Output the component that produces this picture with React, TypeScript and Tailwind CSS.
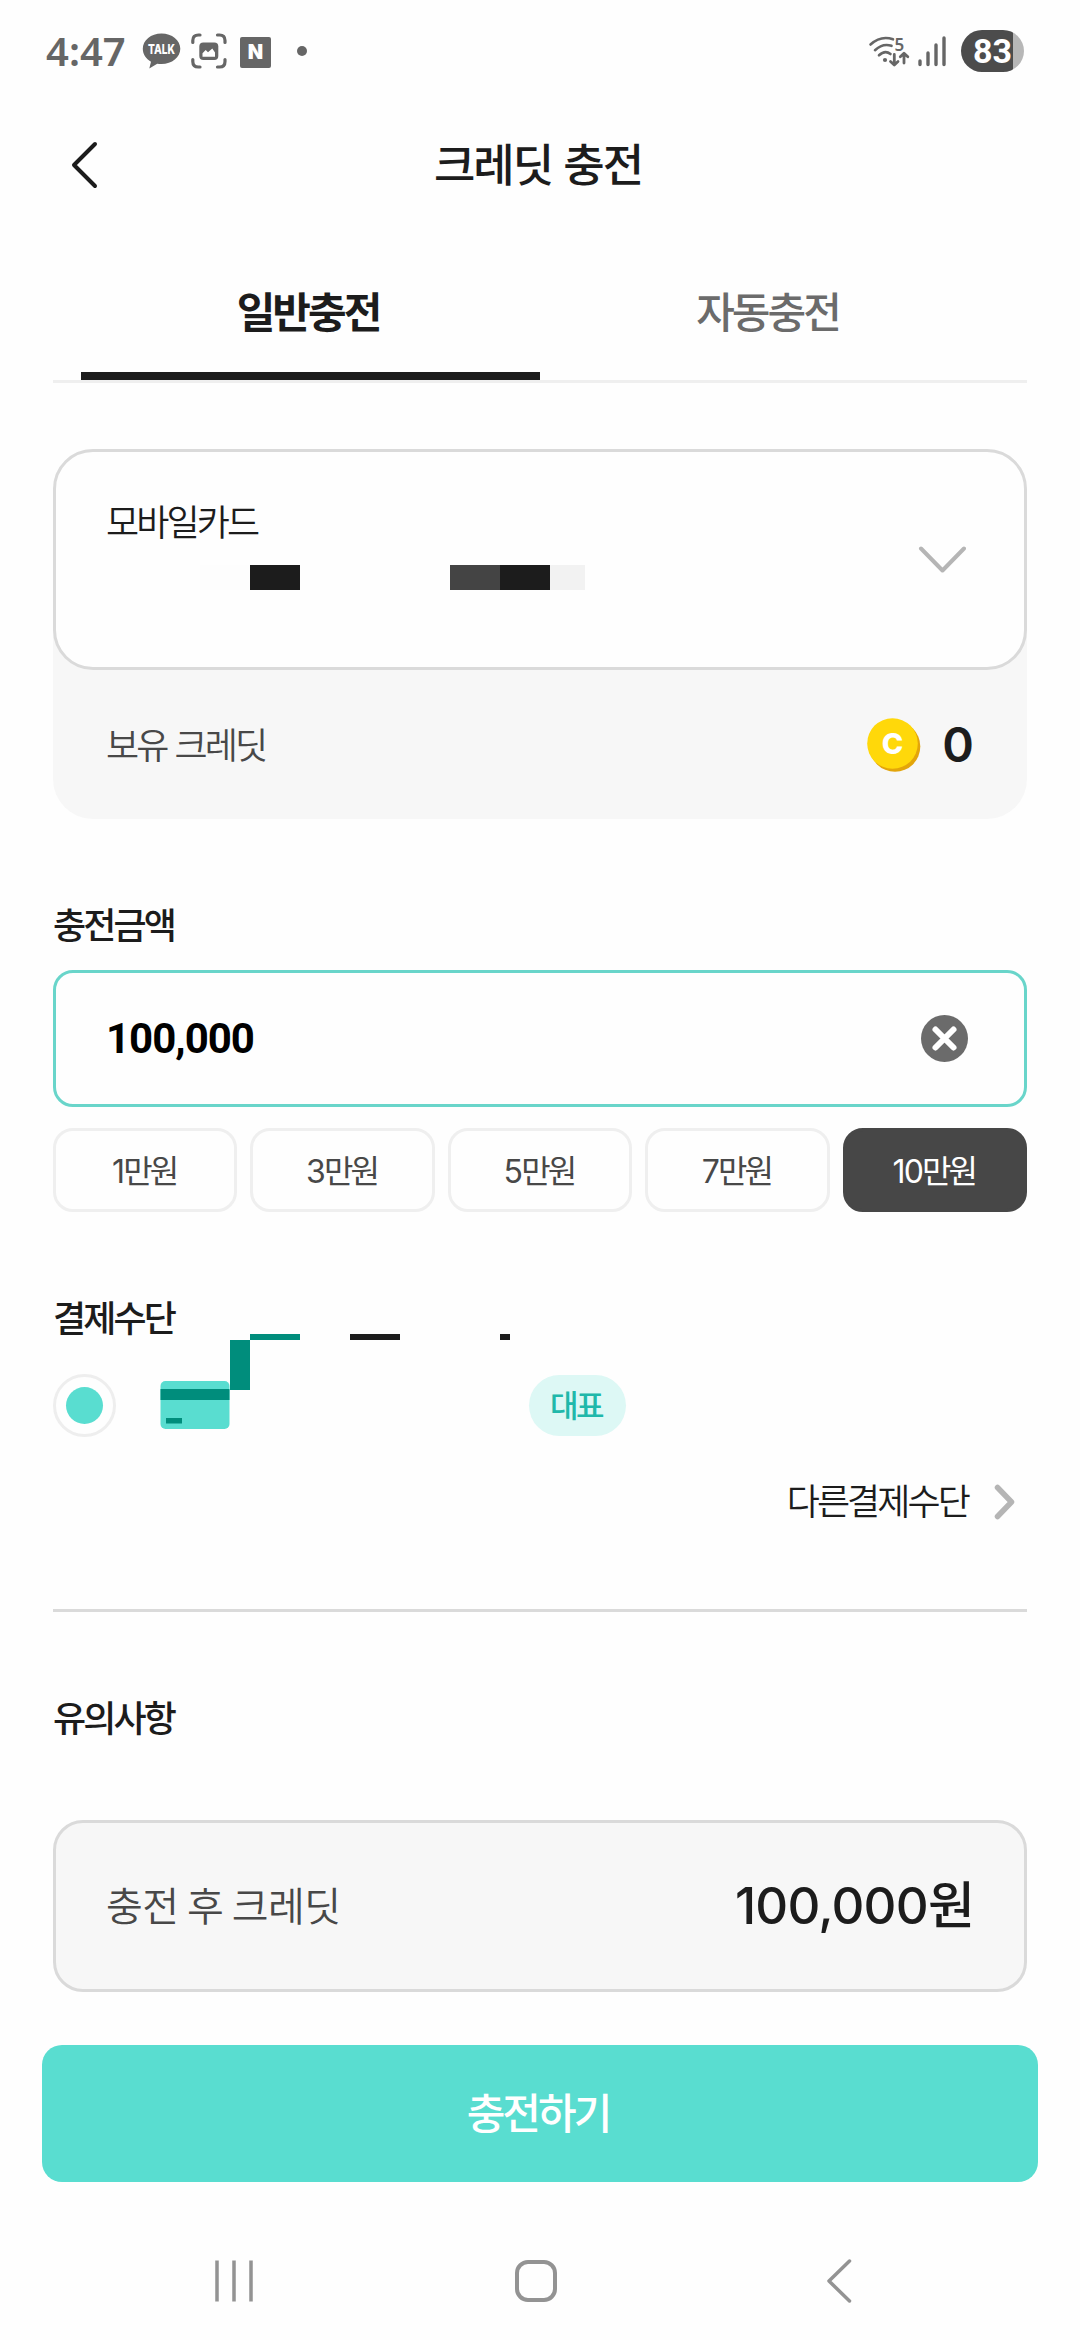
import React, { useState } from "react";
import clsx from "clsx";

const AMOUNTS = [
  { label: "1", value: 10000 },
  { label: "3", value: 30000 },
  { label: "5", value: 50000 },
  { label: "7", value: 70000 },
  { label: "10", value: 100000 },
];

function StatusBar() {
  return (
    <div className="flex h-[102px] items-center justify-between pl-[46px] pr-[56px] text-[#666666]">
      <div className="flex items-center">
        <span className="w-[96px] font-['Noto_Sans',sans-serif] text-[40px] leading-[50px] font-semibold">
          4:47
        </span>
        <svg className="overflow-visible" width="39" height="36" viewBox="0 0 39 36" fill="none">
          <path
            d="M19.500 0.500C9 0.500 0.800 7.200 0.800 15.800C0.800 21.300 4 26 9 28.700L7.300 35.500L15.200 30.700C16.600 31 18 31.100 19.500 31.100C30 31.100 38.300 24.300 38.300 15.800C38.300 7.200 30 0.500 19.500 0.500Z"
            fill="#666666"
          />
          <text
            x="19.500"
            y="20.800"
            textAnchor="middle"
            textLength="27"
            lengthAdjust="spacingAndGlyphs"
            fill="#ffffff"
            className="font-['Inter',sans-serif] text-[13.500px] font-extrabold"
          >
            TALK
          </text>
        </svg>
        <svg className="ml-[10px]" width="36" height="36" viewBox="0 0 36 36" fill="none">
          <path
            d="M1.800 9.500V7.500Q1.800 2 7.500 2H9M26.500 2H28.500Q34 2 34 7.500V9.500M34 26.500V28.500Q34 34 28.500 34H26.500M9 34H7.500Q1.800 34 1.800 28.500V26.500"
            stroke="#666666"
            strokeWidth="3.200"
            strokeLinecap="round"
          />
          <rect x="8.300" y="9.500" width="19" height="17.500" rx="4" fill="#666666" />
          <path
            d="M11.500 23.700V20.300L14.700 17L17 19.300L21.300 15.500L24 19.500V23.700Z"
            fill="#ffffff"
          />
        </svg>
        <span className="ml-[13px] mt-[2px] flex h-[31px] w-[31px] items-center justify-center rounded-[2px] bg-[#666666] font-['Inter',sans-serif] text-[20px] leading-none font-black text-white">
          N
        </span>
        <span className="ml-[26px] h-[10px] w-[10px] rounded-full bg-[#666666]" />
      </div>
      <div className="flex items-center">
        <svg className="overflow-visible" width="40" height="32" viewBox="0 0 40 32" fill="none">
          <path
            d="M1.500 9.500Q12 0 24 4.300M6 15.200Q13.500 8 22.500 10.800M10 20.300Q16 14.500 21.500 19"
            stroke="#666666"
            strokeWidth="2.600"
            strokeLinecap="round"
          />
          <circle cx="16" cy="25" r="2.100" fill="#666666" />
          <text x="25.500" y="16" fill="#666666" className="font-['Noto_Sans',sans-serif] text-[17px] font-semibold">
            5
          </text>
          <path
            d="M25.300 19.500V30M21.500 26.500L25.300 30L29 26.500M35 28V18.500M31.300 21.800L35 18.200L38.800 21.800"
            stroke="#666666"
            strokeWidth="2.800"
            strokeLinecap="round"
            strokeLinejoin="round"
          />
        </svg>
        <svg className="ml-[9px]" width="28" height="32" viewBox="0 0 28 32">
          <path
            d="M2 26V29.500M10 18V29.500M18 10V29.500M26 3V29.500"
            stroke="#666666"
            strokeWidth="3.400"
            strokeLinecap="round"
          />
        </svg>
        <div className="ml-[15px] flex h-[42px] w-[63px] items-center rounded-[21px] bg-[linear-gradient(to_right,#4c4c4c_52px,#b7b7b7_52px)] pl-[12px] font-['Roboto',sans-serif] text-[34px] leading-none font-bold text-white">
          83
        </div>
      </div>
    </div>
  );
}

function Header() {
  return (
    <header className="grid h-[126px] grid-cols-[140px_1fr_140px] items-center">
      <button className="pl-[71px]">
        <svg width="28" height="48" viewBox="0 0 28 48" fill="none">
          <path
            d="M24 3L3 24L24 45"
            stroke="#1c1c1c"
            strokeWidth="4"
            strokeLinecap="round"
            strokeLinejoin="round"
          />
        </svg>
      </button>
      <h1 className="-mt-[4px] pr-[4px] text-center text-[45px] leading-[60px] font-medium tracking-[-2px] [word-spacing:3px]">
        크레딧 충전
      </h1>
    </header>
  );
}

function Tabs() {
  return (
    <div className="mx-[53px] grid h-[155px] grid-cols-2 border-b-[3px] border-[#efefef] px-[28px] text-[42px] leading-[60px] tracking-[-3px]">
      <button className="border-b-[8px] border-[#1c1c1c] pt-[20px] pr-[5px] font-bold">일반충전</button>
      <button className="border-b-[8px] border-transparent pt-[20px] pr-[4px] font-medium text-[#6b6b6b]">
        자동충전
      </button>
    </div>
  );
}

function Coin() {
  return (
    <svg width="54" height="54" viewBox="0 0 54 54">
      <circle cx="28" cy="28.500" r="25.300" fill="#e3a50a" />
      <circle cx="25.500" cy="25.500" r="25.300" fill="#ffd80a" />
      <text
        x="25.500"
        y="36"
        textAnchor="middle"
        fill="#ffffff"
        className="font-['Inter',sans-serif] text-[29px] font-extrabold"
      >
        C
      </text>
    </svg>
  );
}

function CardSelect() {
  return (
    <section className="mt-[66px] h-[370px] rounded-[40px] bg-[#f7f7f7]">
      <button className="flex h-[221px] w-full items-start justify-between rounded-[40px] border-[3px] border-[#dadada] bg-[#fefefe] pl-[50px] pr-[58px] text-left">
        <div className="pt-[48px]">
          <p className="text-[36px] leading-[40px] font-[350] tracking-[-2.900px]">모바일카드</p>
          <div className="mt-[25px] ml-[94px] flex h-[25px]">
            <span className="w-[50px] bg-[#fdfdfd]" />
            <span className="w-[50px] bg-[#1c1c1c]" />
            <span className="ml-[150px] w-[50px] bg-[#444444]" />
            <span className="w-[50px] bg-[#1c1c1c]" />
            <span className="w-[35px] bg-[#f2f2f2]" />
          </div>
        </div>
        <svg className="mt-[93px]" width="48" height="30" viewBox="0 0 48 30" fill="none">
          <path
            d="M3 3.500L24.500 25.500L46 3.500"
            stroke="#b5b5b5"
            strokeWidth="4"
            strokeLinecap="round"
            strokeLinejoin="round"
          />
        </svg>
      </button>
      <div className="flex h-[149px] items-center justify-between px-[53px]">
        <span className="-mt-[4px] text-[36px] leading-[48px] font-[350] tracking-[-2.900px] text-[#484848] [word-spacing:3px]">
          보유 크레딧
        </span>
        <div className="flex items-center">
          <Coin />
          <span className="ml-[21px] font-['Inter',sans-serif] text-[48px] leading-none font-semibold">
            0
          </span>
        </div>
      </div>
    </section>
  );
}

interface AmountProps {
  amount: number;
  onChange: (value: number) => void;
}

function AmountSection({ amount, onChange }: AmountProps) {
  return (
    <section className="mt-[80px]">
      <h2 className="text-[36px] leading-[48px] font-medium tracking-[-2.900px]">충전금액</h2>
      <div className="mt-[23px] flex h-[137px] items-center justify-between rounded-[20px] border-[3px] border-[#69d5ca] pl-[50px] pr-[56px]">
        <span className="font-['Roboto',sans-serif] text-[42px] leading-none font-bold tracking-[-1px] text-black">
          {amount.toLocaleString("en-US")}
        </span>
        <button onClick={() => onChange(0)}>
          <svg width="47" height="47" viewBox="0 0 47 47">
            <circle cx="23.500" cy="23.500" r="23.500" fill="#6b6b6b" />
            <path
              d="M14.500 14.500L32.500 32.500M32.500 14.500L14.500 32.500"
              stroke="#ffffff"
              strokeWidth="6"
              strokeLinecap="round"
            />
          </svg>
        </button>
      </div>
      <div className="mt-[21px] grid h-[84px] grid-cols-5 gap-[13px]">
        {AMOUNTS.map((item) => (
          <button
            key={item.value}
            onClick={() => onChange(item.value)}
            className={clsx(
              "rounded-[20px] border-[3px] pr-[2px] text-[32px] leading-[44px] tracking-[-2.900px]",
              item.value === amount
                ? "border-[#474747] bg-[#474747] text-white"
                : "border-[#efefef] bg-[#fefefe] text-[#484848]"
            )}
          >
            <span className="font-['Inter',sans-serif] tracking-[-1.800px]">{item.label}</span>만원
          </button>
        ))}
      </div>
    </section>
  );
}

function PaymentSection() {
  return (
    <section className="relative mt-[80px]">
      <h2 className="text-[36px] leading-[48px] font-medium tracking-[-2.900px]">결제수단</h2>
      <div className="mt-[34px] flex h-[63px] items-center">
        <span className="flex h-[63px] w-[63px] items-center justify-center rounded-full border-[3px] border-[#eeeeee]">
          <span className="h-[37px] w-[37px] rounded-full bg-[#59ddd0]" />
        </span>
        <svg className="-mt-[2px] ml-[44px]" width="70" height="48" viewBox="0 0 70 48">
          <rect x="0.500" width="69" height="48" rx="5" fill="#59ddd0" />
          <path d="M0.500 8H69.500V19H0.500Z M6 37H22V42.500H6Z" fill="#008d7c" />
        </svg>
        <span className="ml-[299px] flex h-[61px] w-[97px] justify-center rounded-[31px] bg-[#ddf8f5] pr-[3px] text-[31px] leading-[57px] font-medium tracking-[-2.500px] text-[#20b8aa]">
          대표
        </span>
      </div>
      {/* masked card number */}
      <div className="absolute top-[42px] left-[177px] h-[56px] w-[280px]">
        <span className="absolute top-[6px] left-0 h-[50px] w-[20px] bg-[#008d7c]" />
        <span className="absolute top-0 left-[20px] h-[6px] w-[50px] bg-[#008d7c]" />
        <span className="absolute top-0 left-[120px] h-[6px] w-[50px] bg-[#1c1c1c]" />
        <span className="absolute top-0 left-[270px] h-[6px] w-[10px] bg-[#1c1c1c]" />
      </div>
      <button className="mt-[38px] mb-[86px] ml-auto flex h-[48px] items-center pr-[11px]">
        <span className="text-[36px] leading-[48px] font-[350] tracking-[-2.900px]">다른결제수단</span>
        <svg className="mt-[6px] ml-[26px]" width="22" height="36" viewBox="0 0 22 36" fill="none">
          <path
            d="M3.500 3.500L17.500 18L3.500 32.500"
            stroke="#b5b5b5"
            strokeWidth="5.500"
            strokeLinecap="round"
            strokeLinejoin="round"
          />
        </svg>
      </button>
    </section>
  );
}

function NavigationBar() {
  return (
    <nav className="ml-[83px] grid h-[158px] w-[907px] grid-cols-3 items-center justify-items-center pt-[39px]">
      <svg width="38" height="42" viewBox="0 0 38 42">
        <path d="M2 0.500V41.500M19 0.500V41.500M36 0.500V41.500" stroke="#939393" strokeWidth="3.500" />
      </svg>
      <svg width="42" height="42" viewBox="0 0 42 42" fill="none">
        <rect x="2" y="2" width="38" height="38" rx="11" stroke="#939393" strokeWidth="4" />
      </svg>
      <svg width="26" height="44" viewBox="0 0 26 44" fill="none">
        <path
          d="M23.500 2L3 22L23.500 42"
          stroke="#939393"
          strokeWidth="3.500"
          strokeLinecap="round"
          strokeLinejoin="round"
        />
      </svg>
    </nav>
  );
}

function App() {
  const [amount, setAmount] = useState(100000);

  return (
    <div className="h-[2340px] w-[1080px] overflow-hidden bg-[#fefefe] font-['Noto_Sans_CJK_KR',sans-serif] text-[#1c1c1c]">
      <StatusBar />
      <Header />
      <Tabs />
      <main className="px-[53px]">
        <CardSelect />
        <AmountSection amount={amount} onChange={setAmount} />
        <PaymentSection />
        <hr className="h-[3px] border-0 bg-[#dadada]" />
        <h2 className="mt-[80px] text-[36px] leading-[48px] font-medium tracking-[-2.900px]">유의사항</h2>
        <div className="mt-[80px] flex h-[172px] items-center justify-between rounded-[30px] border-[3px] border-[#dadada] bg-[#f7f7f7] px-[50px]">
          <span className="-mt-[5px] text-[40px] leading-[60px] font-[350] tracking-[-0.500px] text-[#484848]">
            충전 후 크레딧
          </span>
          <span className="-mt-[5px] text-[51px] leading-[70px] font-medium tracking-[-0.800px]">
            <span className="font-['Inter',sans-serif]">{amount.toLocaleString("en-US")}</span>원
          </span>
        </div>
      </main>
      <button className="mx-[42px] mt-[53px] block h-[137px] w-[996px] rounded-[20px] bg-[#59ddd0] pr-[4px] pb-[5px] text-[42px] leading-[60px] font-medium tracking-[-3px] text-white">
        충전하기
      </button>
      <NavigationBar />
    </div>
  );
}

export default App;
